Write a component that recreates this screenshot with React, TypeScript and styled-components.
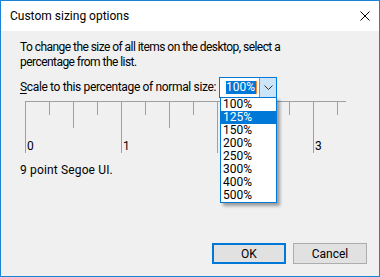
import React from "react";
import styled, { createGlobalStyle } from "styled-components";

const GlobalStyle = createGlobalStyle`
  html, body { margin: 0; padding: 0; background: #ffffff; }
  body { font-family: Roboto, "Noto Sans", sans-serif; font-size: 12px; color: #000; }
  * { box-sizing: border-box; }
`;

const Window = styled.div`
  width: 380px;
  height: 277px;
  border: 1px solid #1883d7;
  display: flex;
  flex-direction: column;
  background: #f0f0f0;
`;

const TitleBar = styled.div`
  height: 30px;
  background: #ffffff;
  display: flex;
  align-items: center;
  justify-content: space-between;
  padding: 0 9px 0 9px;
  flex: none;
`;

const Title = styled.span`
  font-size: 12px;
  line-height: 15px;
  margin-top: 1px;
`;

const Body = styled.div`
  flex: 1;
  display: flex;
  flex-direction: column;
  padding: 9px 12px 12px 19px;
`;

const Text = styled.p`
  margin: 0;
  line-height: 15px;
  white-space: nowrap;
  letter-spacing: -0.55px;
`;

const ScaleRow = styled.div`
  display: flex;
  align-items: center;
  height: 21px;
  margin-top: 7px;
`;

const Label = styled.span`
  width: 199px;
  flex: none;
  white-space: nowrap;
  line-height: 15px;
  letter-spacing: -0.35px;
  u { text-decoration: underline; text-underline-offset: 2px; }
`;

const Combo = styled.div`
  position: relative;
  width: 58px;
  height: 21px;
  border: 1px solid #0078d7;
  background: #ffffff;
  display: flex;
  flex: none;
`;

const Edit = styled.div`
  flex: 1;
  display: flex;
  align-items: center;
  padding-left: 6px;
`;

const Selected = styled.span`
  background: #0078d7;
  color: #ffffff;
  line-height: 13px;
  height: 13px;
  padding-right: 1px;
  display: flex;
  align-items: center;
`;

const Caret = styled.span`
  width: 1px;
  height: 13px;
  background: #ff8728;
`;

const DropButton = styled.div`
  width: 17px;
  height: 19px;
  background: #cce4f7;
  border-left: 1px solid #569de5;
  display: flex;
  align-items: center;
  justify-content: center;
`;

const List = styled.div`
  position: absolute;
  left: 0px;
  top: 19px;
  width: 57px;
  border: 1px solid #0078d7;
  background: #ffffff;
  box-shadow: 3px 3px 3px rgba(0, 0, 0, 0.35);
  z-index: 5;
  display: flex;
  flex-direction: column;
`;

const Item = styled.div<{ $active?: boolean }>`
  height: 13px;
  line-height: 13px;
  padding-left: 2px;
  background: ${(p) => (p.$active ? "#0078d7" : "transparent")};
  color: ${(p) => (p.$active ? "#ffffff" : "#000000")};
`;

const Ruler = styled.div`
  position: relative;
  width: 321px;
  height: 52px;
  margin-left: 5px;
  margin-top: 3px;
  flex: none;
`;

const RulerLabel = styled.span<{ $x: number }>`
  position: absolute;
  top: 38px;
  left: ${(p) => p.$x}px;
  line-height: 15px;
`;

const Note = styled.p`
  margin: 10px 0 0 0;
  line-height: 15px;
  letter-spacing: 0.15px;
`;

const Spacer = styled.div`
  flex: 1;
`;

const Buttons = styled.div`
  display: flex;
  justify-content: flex-end;
  gap: 7px;
`;

const Button = styled.button<{ $default?: boolean }>`
  width: 74px;
  height: 21px;
  padding: 0;
  font-family: inherit;
  font-size: 12px;
  color: #000;
  background: #e1e1e1;
  border: ${(p) => (p.$default ? "2px solid #0078d7" : "1px solid #adadad")};
  display: flex;
  align-items: center;
  justify-content: center;
`;

const ticks = Array.from({ length: 14 }, (_, k) => k);

export default function App() {
  const items = ["100%", "125%", "150%", "200%", "250%", "300%", "400%", "500%"];
  return (
    <>
      <GlobalStyle />
      <Window>
        <TitleBar>
          <Title>Custom sizing options</Title>
          <svg width="10" height="10" viewBox="0 0 10 10">
            <path d="M0.5 0.5 L9.5 9.5 M9.5 0.5 L0.5 9.5" stroke="#000" strokeWidth="1" />
          </svg>
        </TitleBar>
        <Body>
          <Text>
            To change the size of all items on the desktop, select a
            <br />
            percentage from the list.
          </Text>
          <ScaleRow>
            <Label>
              <u>S</u>cale to this percentage of normal size:
            </Label>
            <Combo>
              <Edit>
                <Selected>100%</Selected>
                <Caret />
              </Edit>
              <DropButton>
                <svg width="9" height="5" viewBox="0 0 9 5">
                  <path d="M0.5 0.5 L4.5 4.5 L8.5 0.5" stroke="#333" strokeWidth="1" fill="none" />
                </svg>
              </DropButton>
              <List>
                {items.map((it) => (
                  <Item key={it} $active={it === "125%"}>
                    {it}
                  </Item>
                ))}
              </List>
            </Combo>
          </ScaleRow>
          <Ruler>
            <svg width="321" height="52" viewBox="0 0 321 52" style={{ display: "block" }}>
              <line x1="0" y1="0.5" x2="321" y2="0.5" stroke="#a0a0a0" strokeWidth="1" />
              {ticks.map((k) => {
                const len = k % 4 === 0 ? 52 : k % 2 === 0 ? 27 : 14;
                const x = k * 24 + 0.5;
                return <line key={k} x1={x} y1="0" x2={x} y2={len} stroke="#a0a0a0" strokeWidth="1" />;
              })}
            </svg>
            <RulerLabel $x={2}>0</RulerLabel>
            <RulerLabel $x={98}>1</RulerLabel>
            <RulerLabel $x={290}>3</RulerLabel>
          </Ruler>
          <Note>9 point Segoe UI.</Note>
          <Spacer />
          <Buttons>
            <Button $default>OK</Button>
            <Button>Cancel</Button>
          </Buttons>
        </Body>
      </Window>
    </>
  );
}
